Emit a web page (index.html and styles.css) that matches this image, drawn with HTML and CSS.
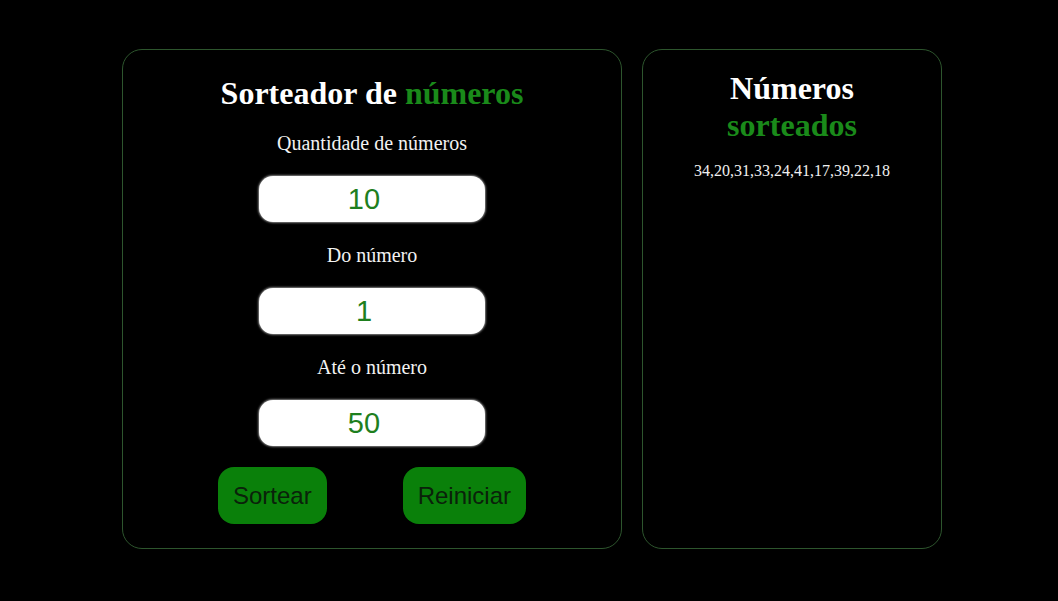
FILE: index.html
```html
<!DOCTYPE html>
<html lang="pt-BR">
<head>
<meta charset="utf-8">
<title>Sorteador de números</title>
<link rel="stylesheet" href="styles.css">
</head>
<body>
<main class="page">
  <section class="card card-form">
    <h1 class="title">Sorteador de <span class="accent">números</span></h1>
    <label class="label" for="qtd">Quantidade de números</label>
    <input class="field" id="qtd" type="text" value="10">
    <label class="label" for="de">Do número</label>
    <input class="field" id="de" type="text" value="1">
    <label class="label" for="ate">Até o número</label>
    <input class="field" id="ate" type="text" value="50">
    <div class="actions">
      <button class="btn">Sortear</button>
      <button class="btn">Reiniciar</button>
    </div>
  </section>
  <section class="card card-result">
    <h2 class="result-title">Números<br><span class="accent">sorteados</span></h2>
    <p class="result-list">34,20,31,33,24,41,17,39,22,18</p>
  </section>
</main>
</body>
</html>
```

FILE: styles.css
```css
* { box-sizing: border-box; }

html, body {
  margin: 0;
  padding: 0;
  background: #000;
  height: 100%;
}

body {
  font-family: "Liberation Serif", "Times New Roman", serif;
  color: #fff;
}

.page {
  display: flex;
  justify-content: center;
  gap: 20px;
  padding-top: 49px;
  padding-left: 6px;
}

.card {
  border: 1px solid #2d552d;
  border-radius: 20px;
  height: 500px;
  display: flex;
  flex-direction: column;
  align-items: center;
}

.card-form {
  width: 500px;
  padding-top: 27px;
}

.card-result {
  width: 300px;
  padding-top: 20px;
}

.accent { color: #1a8a1a; }

.title {
  margin: 0;
  font-size: 32px;
  line-height: 32px;
  font-weight: bold;
}

.label {
  display: block;
  font-size: 20px;
  line-height: 20px;
  margin-top: 23px;
  color: #f2f2f2;
}

.title + .label { margin-top: 24px; }

.field {
  display: block;
  width: 226px;
  height: 46px;
  margin-top: 23px;
  padding: 0 16px 0 0;
  border: none;
  border-radius: 14px;
  background: #fff;
  box-shadow: 0 0 2px 1px rgba(255,255,255,0.5);
  text-align: center;
  font-family: "Liberation Sans", Arial, sans-serif;
  font-size: 29px;
  color: #1e7f1e;
  outline: none;
}

.actions {
  display: flex;
  gap: 76px;
  margin-top: 21px;
}

.btn {
  height: 57px;
  padding: 0 15px;
  border: none;
  border-radius: 16px;
  background: #0a800a;
  color: #0a220a;
  font-family: "Liberation Sans", Arial, sans-serif;
  font-size: 24px;
  cursor: pointer;
}

.result-title {
  margin: 0;
  font-size: 32px;
  line-height: 37px;
  font-weight: bold;
  text-align: center;
}

.result-list {
  margin: 18px 0 0;
  font-size: 16px;
  line-height: 18px;
  color: #f0f0f0;
}
```
